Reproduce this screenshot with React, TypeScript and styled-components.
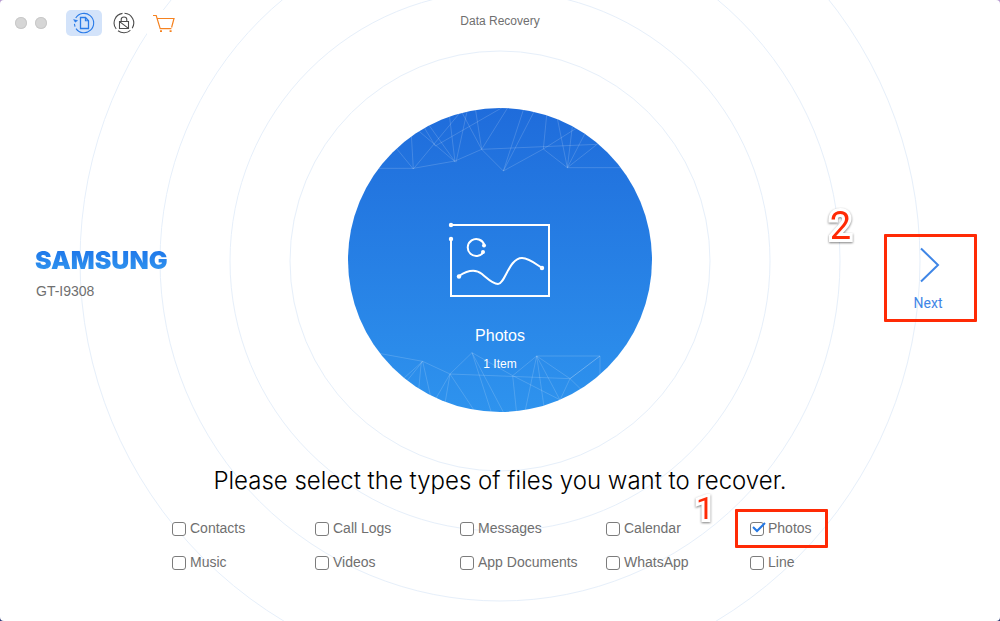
import React, { useState } from "react";
import styled, { createGlobalStyle, css } from "styled-components";

const sans = '"Liberation Sans", Arial, sans-serif';

const GlobalStyle = createGlobalStyle`
  *, *::before, *::after { box-sizing: border-box; }
  body {
    margin: 0;
    background: linear-gradient(#b79ad0, #2c3878);
    font-family: ${sans};
    color: #6f6f6f;
  }
  button { font: inherit; border: 0; padding: 0; cursor: pointer; }
  h1, h2, p { margin: 0; font-weight: 400; }
`;

const Window = styled.div`
  position: relative;
  z-index: 0;
  min-height: 100vh;
  overflow: hidden;
  background: #fff;
  border-radius: 4px;
`;

const TitleBar = styled.header`
  display: grid;
  grid-template-columns: 1fr auto 1fr;
  height: 46px;
`;

const Controls = styled.div`
  display: flex;
  align-items: center;
  padding-left: 15px;
`;

const Dots = styled.div`
  display: flex;
  gap: 8px;
  margin-right: 19px;
`;

const Dot = styled.button`
  width: 12px;
  height: 12px;
  border-radius: 50%;
  background: #d6d6d6;
  box-shadow: inset 0 0 0 1px #c9c9c9;
`;

const Tools = styled.nav`
  display: flex;
  gap: 4px;
`;

const Tool = styled.button<{ $active?: boolean; $tone: string }>`
  display: grid;
  place-items: center;
  width: 36px;
  height: 26px;
  border-radius: 5px;
  background: ${(p) => (p.$active ? "#d3e3fa" : "#fff")};
  color: ${(p) => p.$tone};
`;

const WindowTitle = styled.h1`
  font-size: 12px;
  line-height: 14px;
  padding-top: 14px;
`;

const Stage = styled.main`
  display: grid;
  grid-template-columns: 1fr auto 1fr;
  padding-top: 62px;
`;

const Device = styled.section`
  align-self: start;
  padding: 136px 0 0 35px;
`;

const Brand = styled.h2`
  width: max-content;
  font-family: Inter, ${sans};
  font-size: 25px;
  font-weight: 900;
  line-height: 32px;
  color: transparent;
  background: linear-gradient(#1f78ea 20%, #2f92ee 80%);
  background-clip: text;
`;

const Model = styled.p`
  padding-left: 1px;
  font-size: 14px;
  line-height: 16px;
  margin-top: 7px;
`;

const DiscArea = styled.div`
  position: relative;
  width: 304px;
  height: 304px;
`;

const RingsArt = styled.svg`
  position: absolute;
  z-index: -1;
  left: 50%;
  top: 50%;
  width: 844px;
  height: 844px;
  transform: translate(-50%, -50%);
`;

const Disc = styled.section`
  position: relative;
  display: flex;
  flex-direction: column;
  align-items: center;
  height: 100%;
  padding-top: 113px;
  border-radius: 50%;
  overflow: hidden;
  color: #fff;
  background: linear-gradient(#1f6cdb, #2e93ee);
`;

const MeshArt = styled.svg`
  position: absolute;
  inset: 0;
  width: 100%;
  height: 100%;
`;

const DiscTitle = styled.h2`
  font-size: 16px;
  line-height: 20px;
  margin-top: 27px;
`;

const DiscCount = styled.p`
  font-size: 12px;
  line-height: 16px;
  margin-top: 10px;
`;

const NextArea = styled.div`
  position: relative;
  align-self: start;
  justify-self: end;
  margin: 126px 23px 0 0;
`;

const NextButton = styled.button`
  display: flex;
  flex-direction: column;
  align-items: center;
  width: 93px;
  height: 88px;
  padding: 13px 5px 0 0;
  background: transparent;
  color: #3f86e6;
  font-family: Roboto, ${sans};
  font-size: 14px;
  line-height: 16px;

  svg { margin: 0 -4px 12px 0; }
`;

const Highlight = styled.span`
  position: absolute;
  inset: 0;
  border: 3px solid #ff2a05;
  border-radius: 1px;
  pointer-events: none;
`;

const Step = styled.span<{ $size: number }>`
  position: absolute;
  right: 100%;
  font-family: Roboto, ${sans};
  font-size: ${(p) => p.$size}px;
  line-height: 40px;
  color: #ff2a05;
  -webkit-text-stroke: 6px #fff;
  paint-order: stroke fill;
  filter: drop-shadow(0 1px 1px rgba(0, 0, 0, 0.5));
`;

const NextStep = styled(Step)`
  margin-right: 33px;
  top: -28px;
`;

const PhotosStep = styled(Step)`
  margin-right: 36px;
  top: -30px;
`;

const Picker = styled.fieldset`
  margin: 53px 0 0;
  padding: 0 0 40px;
  border: 0;
  min-width: 0;
`;

const Prompt = styled.legend`
  width: 100%;
  padding: 0;
  text-align: center;
  font-family: Inter, ${sans};
  font-weight: 300;
  font-size: 24px;
  line-height: 32px;
  color: #000;
`;

const Types = styled.div`
  display: grid;
  grid-template-columns: 143px 145px 146px 144px 78px;
  row-gap: 14px;
  justify-content: center;
  margin-top: 21px;
`;

const TypeCell = styled.div`
  position: relative;
`;

const TypeLabel = styled.label`
  display: flex;
  align-items: center;
  gap: 4px;
  font-size: 14px;
  line-height: 20px;
  white-space: nowrap;
`;

const Tick = styled.input`
  appearance: none;
  flex: none;
  width: 14px;
  height: 14px;
  margin: 2px 0 0;
  border: 1px solid #7c7c7c;
  border-radius: 3px;
  background: #fff;
`;

const TickMark = styled.svg`
  position: absolute;
  left: 1px;
  top: 3px;
  pointer-events: none;
`;

const CellHighlight = styled(Highlight)`
  inset: -9px 0 -10px -15px;
`;

const stroke = css`
  fill: none;
  stroke: currentColor;
`;

const Glyph = styled.svg`
  display: block;
  ${stroke}
`;

const RestoreIcon = () => (
  <Glyph width="22" height="22" viewBox="0 0 22 22" strokeWidth="1.1">
    <path d="M2.700 6A9.700 9.700 0 1 1 3 16.600" />
    <path d="M0.600 7.600L4.600 8.600L2.200 10.200Z" fill="currentColor" strokeWidth="0.500" />
    <path d="M1.400 11.800L2 14.600" />
    <path d="M7.500 5.500h5l3 3.200v7.800h-8z" strokeWidth="1.300" />
    <path d="M12.400 5.600v3.200h3" />
  </Glyph>
);

const UnlockIcon = () => (
  <Glyph width="22" height="22" viewBox="0 0 22 22" strokeWidth="1.1">
    <path d="M3.200 17A9.700 9.700 0 0 1 9.500 1.400" />
    <path d="M11.500 1.300A9.700 9.700 0 0 1 19.200 16.200" />
    <path d="M17.400 18.300A9.700 9.700 0 0 1 5 18.700" />
    <path d="M8.200 9.300V7.600a2.800 2.600 0 0 1 5.600 0v1.700" />
    <path d="M6.500 9.500h9v7h-9zM6.600 9.600l8.800 6.800" />
  </Glyph>
);

const CartIcon = () => (
  <Glyph width="22" height="22" viewBox="0 0 22 22" strokeWidth="1.2">
    <path d="M0 3.500h3.200l4 13.200h11.200M4 6.500h17l-2.400 9" />
    <path d="M7 18.200h2v1.800H7zM16.600 18.200h2v1.800h-2z" fill="currentColor" stroke="none" />
  </Glyph>
);

const Rings = () => (
  <RingsArt viewBox="0 0 844 844" fill="none" stroke="#e6effa" aria-hidden="true">
    {[210, 270, 340, 420].map((r) => (
      <circle key={r} cx="422" cy="423" r={r} />
    ))}
  </RingsArt>
);

const Mesh = () => (
  <MeshArt viewBox="24 24 912 912" fill="none" stroke="#fff" strokeOpacity="0.16" strokeWidth="3" aria-hidden="true">
    <path d="M100 205H220L345 183L425 148L770 133M165 140L220 207L214 105M220 207L360 38M235 92L345 185M250 78L286 138L500 15M266 74L345 185L328 45M348 187L382 30M362 30L425 148L406 25M425 148L505 20M425 148L490 213L550 30M490 213L582 35M490 213L610 147L620 45M610 147L682 203L735 100M610 147L710 84M682 203L652 55M682 203L697 80M682 203L775 130M682 203H850" />
    <path d="M100 757L248 784L330 822L690 836L780 768H590L518 827L396 758L330 822M248 784L180 845M248 784L195 850M244 784L236 870M248 784L272 890M330 822L285 900M330 822L315 910M330 822L405 935M396 758L455 940M396 758L492 940M518 827L530 940M518 827L665 902M590 768L555 935M590 768L612 920M590 768L660 900M590 768L690 836L660 900M690 836L725 870M690 836L780 768V830" />
  </MeshArt>
);

const PhotoIcon = () => (
  <Glyph width="104" height="78" viewBox="0 0 104 78" aria-hidden="true">
    <path d="M3 4H101V75H3V18" strokeWidth="2" />
    <path d="M36.2 23.5A8.5 8.5 0 1 0 35.5 31" strokeWidth="2" />
    <path d="M11 55C20 49 28 48 34 53C40 58 45 63 50 63C57 63 61 37 74 37C81 37 88 43 94 47" strokeWidth="2" />
    <g fill="currentColor" stroke="none">
      <circle cx="3" cy="4" r="2.200" />
      <circle cx="3" cy="18" r="2.200" />
      <circle cx="36" cy="24.500" r="2" />
      <circle cx="35" cy="31" r="2" />
      <circle cx="11" cy="55.500" r="2.200" />
      <circle cx="94" cy="47" r="2.200" />
    </g>
  </Glyph>
);

const types = [
  "Contacts", "Call Logs", "Messages", "Calendar", "Photos",
  "Music", "Videos", "App Documents", "WhatsApp", "Line",
];

export default function App() {
  const [selected, setSelected] = useState<string[]>(["Photos"]);
  const toggle = (name: string) =>
    setSelected((now) => (now.includes(name) ? now.filter((n) => n !== name) : [...now, name]));

  return (
    <Window>
      <GlobalStyle />
      <TitleBar>
        <Controls>
          <Dots>
            <Dot aria-label="Close" />
            <Dot aria-label="Minimize" />
          </Dots>
          <Tools>
            <Tool $active $tone="#2a7be8" aria-label="Recover data"><RestoreIcon /></Tool>
            <Tool $tone="#4d4d4d" aria-label="Remove lock"><UnlockIcon /></Tool>
            <Tool $tone="#f58220" aria-label="Store"><CartIcon /></Tool>
          </Tools>
        </Controls>
        <WindowTitle>Data Recovery</WindowTitle>
      </TitleBar>
      <Stage>
        <Device>
          <Brand>SAMSUNG</Brand>
          <Model>GT-I9308</Model>
        </Device>
        <DiscArea>
          <Rings />
          <Disc>
            <Mesh />
            <PhotoIcon />
            <DiscTitle>Photos</DiscTitle>
            <DiscCount>1 Item</DiscCount>
          </Disc>
        </DiscArea>
        <NextArea>
          <NextButton>
            <Glyph width="20" height="36" viewBox="0 0 20 36" strokeWidth="2" aria-hidden="true">
              <path d="M1 1.500L18 18L1 34.500" />
            </Glyph>
            Next
          </NextButton>
          <Highlight />
          <NextStep $size={38}>2</NextStep>
        </NextArea>
      </Stage>
      <Picker>
        <Prompt>Please select the types of files you want to recover.</Prompt>
        <Types>
          {types.map((name) => (
            <TypeCell key={name}>
              <TypeLabel>
                <Tick type="checkbox" checked={selected.includes(name)} onChange={() => toggle(name)} />
                {name}
              </TypeLabel>
              {selected.includes(name) && (
                <TickMark width="16" height="14" viewBox="0 0 16 14" fill="none" stroke="#2478e5" strokeWidth="2">
                  <path d="M2 6L6 10L14 2" />
                </TickMark>
              )}
              {name === "Photos" && (
                <>
                  <CellHighlight />
                  <PhotosStep $size={32}>1</PhotosStep>
                </>
              )}
            </TypeCell>
          ))}
        </Types>
      </Picker>
    </Window>
  );
}
